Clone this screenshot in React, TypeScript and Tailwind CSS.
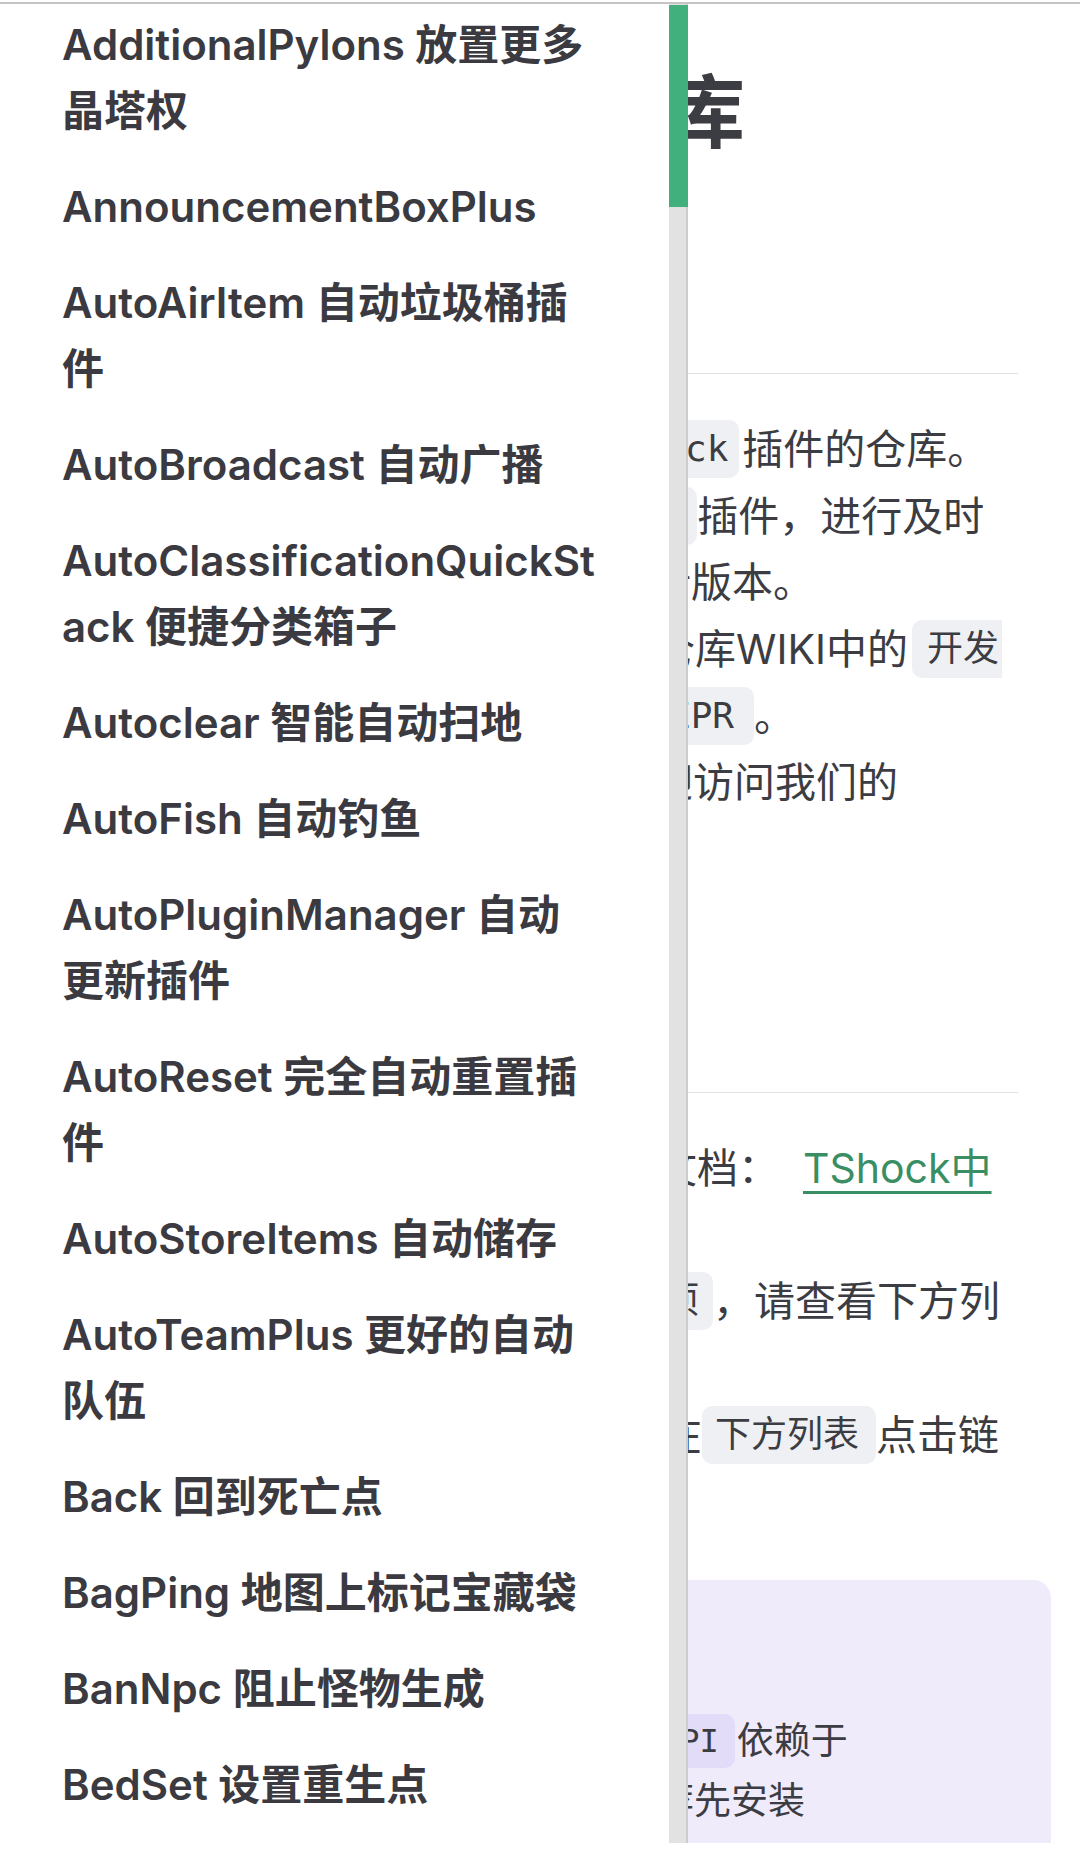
import React from "react";

const items: string[][] = [
  ["AdditionalPylons 放置更多", "晶塔权"],
  ["AnnouncementBoxPlus"],
  ["AutoAirItem 自动垃圾桶插", "件"],
  ["AutoBroadcast 自动广播"],
  ["AutoClassificationQuickSt", "ack 便捷分类箱子"],
  ["Autoclear 智能自动扫地"],
  ["AutoFish 自动钓鱼"],
  ["AutoPluginManager 自动", "更新插件"],
  ["AutoReset 完全自动重置插", "件"],
  ["AutoStoreItems 自动储存"],
  ["AutoTeamPlus 更好的自动", "队伍"],
  ["Back 回到死亡点"],
  ["BagPing 地图上标记宝藏袋"],
  ["BanNpc 阻止怪物生成"],
  ["BedSet 设置重生点"],
];

function Code({ children, className = "" }: { children: React.ReactNode; className?: string }) {
  return (
    <span
      className={
        "h-[58px] flex items-center bg-[#eff0f3] text-[36px] font-['DejaVu_Sans_Mono','Noto_Sans_CJK_SC',monospace] " +
        className
      }
    >
      {children}
    </span>
  );
}

function Line({ className = "", children }: { className?: string; children: React.ReactNode }) {
  return (
    <div className={"h-[66.7px] flex items-center whitespace-nowrap leading-[66.7px] " + className}>
      {children}
    </div>
  );
}

export default function App() {
  return (
    <div className="w-[1080px] h-[1875px] bg-white overflow-hidden text-[#3c3c43] font-['Inter','Noto_Sans_CJK_SC',sans-serif]">
      <div className="h-[2px] bg-white" />
      <div className="h-[2px] bg-[#c4c4c4]" />
      <div className="relative h-[1839px] overflow-hidden">
        {/* main content */}
        <div className="flex flex-col text-[41px]">
          <div className="mt-[63px] h-[90px] leading-[90px] pl-[425px] text-[80px] font-bold whitespace-nowrap">
            插件仓库
          </div>
          <div className="mt-[216px] ml-[600px] mr-[62px] h-px bg-[#e2e2e3]" />

          <div className="mt-[42px] flex flex-col">
            <Line className="pl-[660px]">
              <Code className="pl-[25px] pr-[11px] rounded-[10px]">ck</Code>
              <span className="ml-[3px]">插件的仓库。</span>
            </Line>
            <Line className="pl-[641px]">
              <Code className="pr-[13px] rounded-[10px]">ck</Code>
              <span>插件，进行及时</span>
            </Line>
            <Line className="pl-[650px]">
              <span>新版本。</span>
            </Line>
            <Line className="pl-[654px]">
              <span>仓库WIKI中的</span>
              <Code className="ml-[4px] pl-[15px] pr-[3px] rounded-l-[10px]">开发</Code>
            </Line>
            <Line className="pl-[640px]">
              <Code className="pl-[29px] pr-[20px] rounded-[10px]">EPR</Code>
              <span>。</span>
            </Line>
            <Line className="pl-[652px]">
              <span>迎访问我们的</span>
            </Line>
          </div>

          <div className="mt-[276px] ml-[600px] mr-[62px] h-px bg-[#e2e2e3]" />

          <Line className="mt-[41.6px] pl-[656px]">
            <span>文档：</span>
            <span className="ml-[24px] text-[#3a8e63] underline decoration-[3px] underline-offset-[8px]">TShock中</span>
          </Line>
          <Line className="mt-[66.3px] pl-[649px]">
            <Code className="pl-[14px] pr-[14px] rounded-[10px]">项</Code>
            <span>，请查看下方列</span>
          </Line>
          <Line className="mt-[67.3px] pl-[661px]">
            <span>在</span>
            <Code className="pl-[13px] pr-[17px] rounded-[10px]">下方列表</Code>
            <span>点击链</span>
          </Line>

          <div className="mt-[111.7px] ml-[600px] mr-[29px] h-[400px] rounded-[18px] bg-[#efebfb] pt-[131px] text-[37px]">
            <div className="h-[60px] flex items-center whitespace-nowrap leading-[60px] -ml-[600px] pl-[651px]">
              <span className="h-[54px] flex items-center pl-[10px] pr-[16px] rounded-[10px] bg-[#e3dcf8] text-[32px] font-['DejaVu_Sans_Mono',monospace]">
                API
              </span>
              <span className="ml-[2px]">依赖于</span>
            </div>
            <div className="h-[60px] flex items-center whitespace-nowrap leading-[60px] -ml-[600px] pl-[657px]">
              <span>荐先安装</span>
            </div>
          </div>
        </div>

        {/* sidebar overlay */}
        <div className="absolute left-0 top-0 bottom-0 w-[688px] bg-white flex">
          <div className="flex-1 pl-[62px] -mt-[7px] flex flex-col text-[42px] font-semibold text-[#3a3a40]">
            {items.map((lines, i) => (
              <div key={i} className="py-[15px]">
                {lines.map((l, j) => (
                  <div key={j} className="leading-[66px] h-[66px] whitespace-nowrap">
                    {l}
                  </div>
                ))}
              </div>
            ))}
          </div>
          <div className="w-[19px] bg-[#e2e2e2] border-r-2 border-[#cdcdcd] relative">
            <div className="absolute left-0 top-[1px] w-[19px] h-[202px] bg-[#41b07c]" />
          </div>
        </div>
      </div>
    </div>
  );
}
